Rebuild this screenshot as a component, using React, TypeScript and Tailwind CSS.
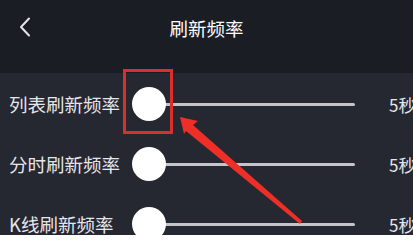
import React from "react";

const rows = ["列表刷新频率", "分时刷新频率", "K线刷新频率"];

function SliderRow({ label }: { label: string }) {
  return (
    <div className="flex h-[60px] items-center">
      <div className="w-[132px] shrink-0 pl-[9px] text-[18.5px] leading-none text-[#e6e6ea] whitespace-nowrap">
        {label}
      </div>
      <div className="relative flex h-[34px] w-[223px] shrink-0 items-center">
        <div className="ml-[17px] h-[3px] flex-1 rounded-full bg-[#c4c4ca]" />
        <div className="absolute left-0 top-0 h-[34px] w-[34px] rounded-full bg-white" />
      </div>
      <div className="ml-[34px] text-[17px] leading-none text-[#e6e6ea] whitespace-nowrap">
        5秒
      </div>
    </div>
  );
}

export default function App() {
  return (
    <div
      className="relative h-[235px] w-[413px] overflow-hidden bg-[#252731]"
      style={{ fontFamily: '"Noto Sans CJK SC", "Noto Sans", sans-serif' }}
    >
      {/* header */}
      <div className="relative flex h-[73px] items-center justify-center bg-[#1b1d25]">
        <svg
          className="absolute left-[18px] top-[17px]"
          width="14"
          height="20"
          viewBox="0 0 14 20"
          fill="none"
        >
          <path d="M11 1.5 L3 10 L11 18.5" stroke="#e4e4e8" strokeWidth="2" strokeLinecap="round" strokeLinejoin="round" />
        </svg>
        <div className="-mt-[17px] text-[18.5px] leading-none text-white">刷新频率</div>
      </div>

      {/* rows */}
      <div className="pt-[1px]">
        {rows.map((r) => (
          <SliderRow key={r} label={r} />
        ))}
      </div>

      {/* annotation overlay */}
      <div className="absolute left-[123px] top-[69px] h-[65px] w-[50px] border-[3px] border-[#d9302c]" />
      <svg className="absolute left-0 top-0" width="413" height="235" viewBox="0 0 413 235">
        <polygon
          points="180,117 198,121 193,125 302,221 300,224 186,131 184,134"
          fill="#ee2f27"
        />
      </svg>
    </div>
  );
}
